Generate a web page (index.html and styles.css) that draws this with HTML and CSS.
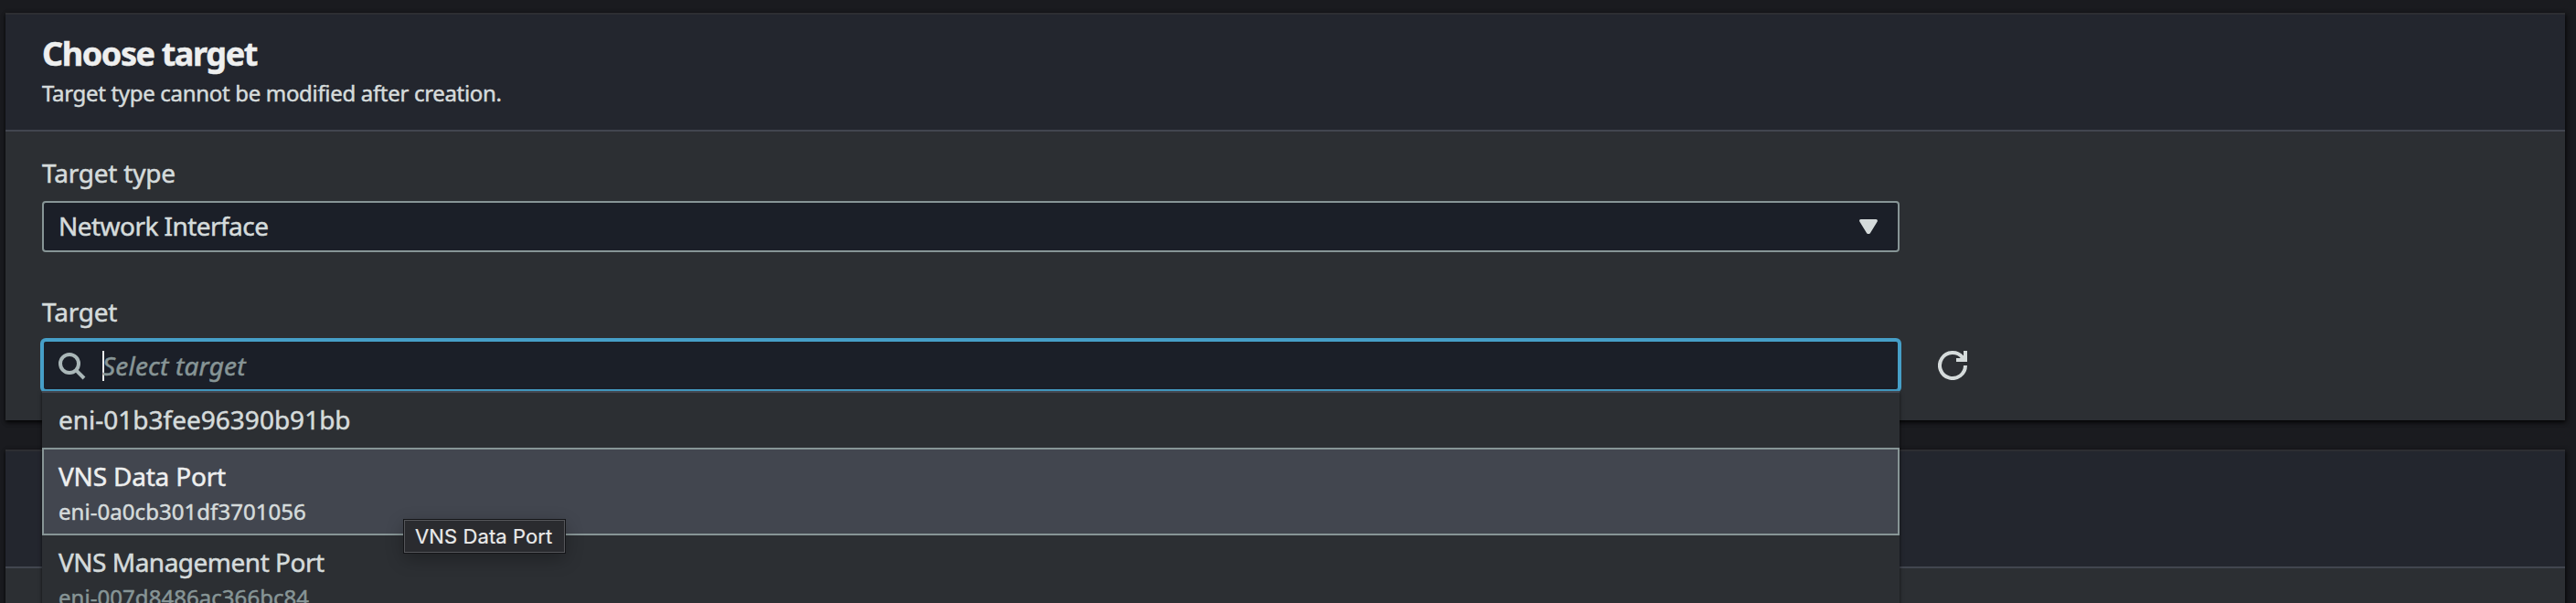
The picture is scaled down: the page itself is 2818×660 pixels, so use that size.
FILE: index.html
```
<!DOCTYPE html>
<html lang="en">
<head>
<meta charset="utf-8">
<title>Choose target</title>
<link rel="stylesheet" href="styles.css">
</head>
<body>
<main class="page">
  <section class="panel">
    <header class="panel-header">
      <h2 class="panel-title">Choose target</h2>
      <p class="panel-description">Target type cannot be modified after creation.</p>
    </header>
    <div class="panel-body">
      <div class="field">
        <label class="label">Target type</label>
        <div class="select">
          <span class="select-value">Network Interface</span>
          <svg class="caret-icon" width="20" height="16" viewBox="0 0 20 16"><path d="M1.6 1.6H18.4L10.6 14.4H9.4Z" fill="#d5dbdb" stroke="#d5dbdb" stroke-width="3" stroke-linejoin="round"/></svg>
        </div>
      </div>
      <div class="field">
        <label class="label">Target</label>
        <div class="field-row">
          <div class="search">
            <svg class="search-icon" width="30" height="30" viewBox="0 0 30 30" fill="none" stroke="#aab7b8" stroke-width="4"><circle cx="12" cy="12" r="10"/><path d="M18.6 18.6L28 28"/></svg>
            <span class="text-cursor"></span>
            <span class="placeholder">Select target</span>
            <ul class="menu">
              <li class="option"><span class="option-label option-id">eni-01b3fee96390b91bb</span></li>
              <li class="option option-active">
                <span class="option-label">VNS Data Port</span>
                <span class="option-sub">eni-0a0cb301df3701056</span>
                <span class="tooltip">VNS Data Port</span>
              </li>
              <li class="option">
                <span class="option-label option-long">VNS Management Port</span>
                <span class="option-sub">eni-007d8486ac366bc84</span>
              </li>
            </ul>
          </div>
          <svg class="refresh-icon" width="32" height="32" viewBox="0 0 32 32" fill="none" stroke="#d5dbdb" stroke-width="4"><path d="M30 16A14 14 0 1 1 26.8 7.1L29 9.5"/><path d="M30 0V10H20"/><path d="M24 8L28 5V10Z" fill="#d5dbdb" stroke="none"/></svg>
        </div>
      </div>
    </div>
  </section>
  <section class="panel">
    <header class="panel-header"></header>
    <div class="panel-body"></div>
  </section>
</main>
</body>
</html>
```
FILE: styles.css
```
* { box-sizing: border-box; }
body {
  margin: 0;
  background: #1a1b1f;
  color: #d5dbdb;
  font-family: "Noto Sans", "Open Sans", sans-serif;
  font-size: 28px;
  line-height: 36px;
  -webkit-text-stroke: .5px currentColor;
}
.page {
  height: 660px;
  overflow: hidden;
  padding: 14px 12px 0 6px;
  display: flex;
  flex-direction: column;
  gap: 32px;
}
.panel {
  flex: none;
  background: #2c2f33;
  box-shadow: 0 2px 4px rgba(0, 0, 0, .75), 2px 2px 6px rgba(0, 0, 0, .4);
  border-top: 2px solid #2d2e32;
}
.panel-header {
  height: 128px;
  padding: 21px 40px 0;
  background: #23262e;
  border-bottom: 2px solid #42464f;
}
.panel-title {
  margin: 0 0 5px;
  font-size: 36px;
  line-height: 44px;
  font-weight: 700;
  letter-spacing: -1.4px;
  color: #eeefef;
}
.panel-description {
  margin: 0;
  font-size: 24px;
  line-height: 32px;
  letter-spacing: -.32px;
}
.panel-body {
  height: 316px;
  padding: 27px 40px 0;
  display: flex;
  flex-direction: column;
  gap: 47px;
}
.field {
  display: flex;
  flex-direction: column;
  gap: 13px;
}
.label { letter-spacing: -.2px; }
.select, .search {
  width: 2032px;
  height: 56px;
  display: flex;
  align-items: center;
  background: #1b1f28;
  border: 2px solid #879596;
  border-radius: 4px;
}
.select {
  justify-content: space-between;
  padding: 0 22px 0 16px;
}
.select-value { letter-spacing: -.55px; margin-bottom: 2px; }
.field-row {
  display: flex;
  align-items: center;
  gap: 42px;
}
.search {
  position: relative;
  padding-left: 16px;
  border-color: #469fc8;
  box-shadow: 0 0 0 2px #469fc8;
}
.search-icon { margin: 2px 18px 0 0; }
.text-cursor {
  width: 2px;
  height: 33px;
  background: #eaeded;
}
.placeholder {
  margin-left: -2px;
  font-style: italic;
  letter-spacing: .2px;
  color: #879596;
}
.menu {
  position: absolute;
  z-index: 2;
  top: 54px;
  left: -2px;
  width: 2032px;
  margin: 0;
  padding: 0;
  list-style: none;
  background: #2c2f33;
  border-top: 2px solid #42464f;
  box-shadow: 0 2px 4px rgba(0, 0, 0, .65);
}
.option {
  display: flex;
  flex-direction: column;
  gap: 5px;
  padding: 11px 18px 13px;
}
.option-active {
  position: relative;
  height: 96px;
  padding: 11px 16px;
  background: #42464f;
  border: 2px solid #879596;
}
.option-label { letter-spacing: -.2px; }
.option-id { letter-spacing: 0; }
.option-long { letter-spacing: -.5px; }
.option-active .option-label { color: #eeefef; }
.option-sub {
  font-size: 24px;
  line-height: 32px;
  letter-spacing: .05px;
  color: #879596;
}
.option-active .option-sub { color: #d5dbdb; }
.tooltip {
  position: absolute;
  z-index: 3;
  left: 394px;
  top: 77px;
  width: 176px;
  height: 36px;
  padding-left: 11px;
  background: #2a2b2f;
  border: 1px solid #55565a;
  outline: 1px solid #141518;
  box-shadow: 0 6px 20px rgba(0, 0, 0, .3);
  color: #eaeaea;
  font-family: Inter, sans-serif;
  font-size: 22px;
  line-height: 34px;
  letter-spacing: .1px;
  white-space: nowrap;
  -webkit-text-stroke: .2px currentColor;
}
.refresh-icon { flex: none; }
```
